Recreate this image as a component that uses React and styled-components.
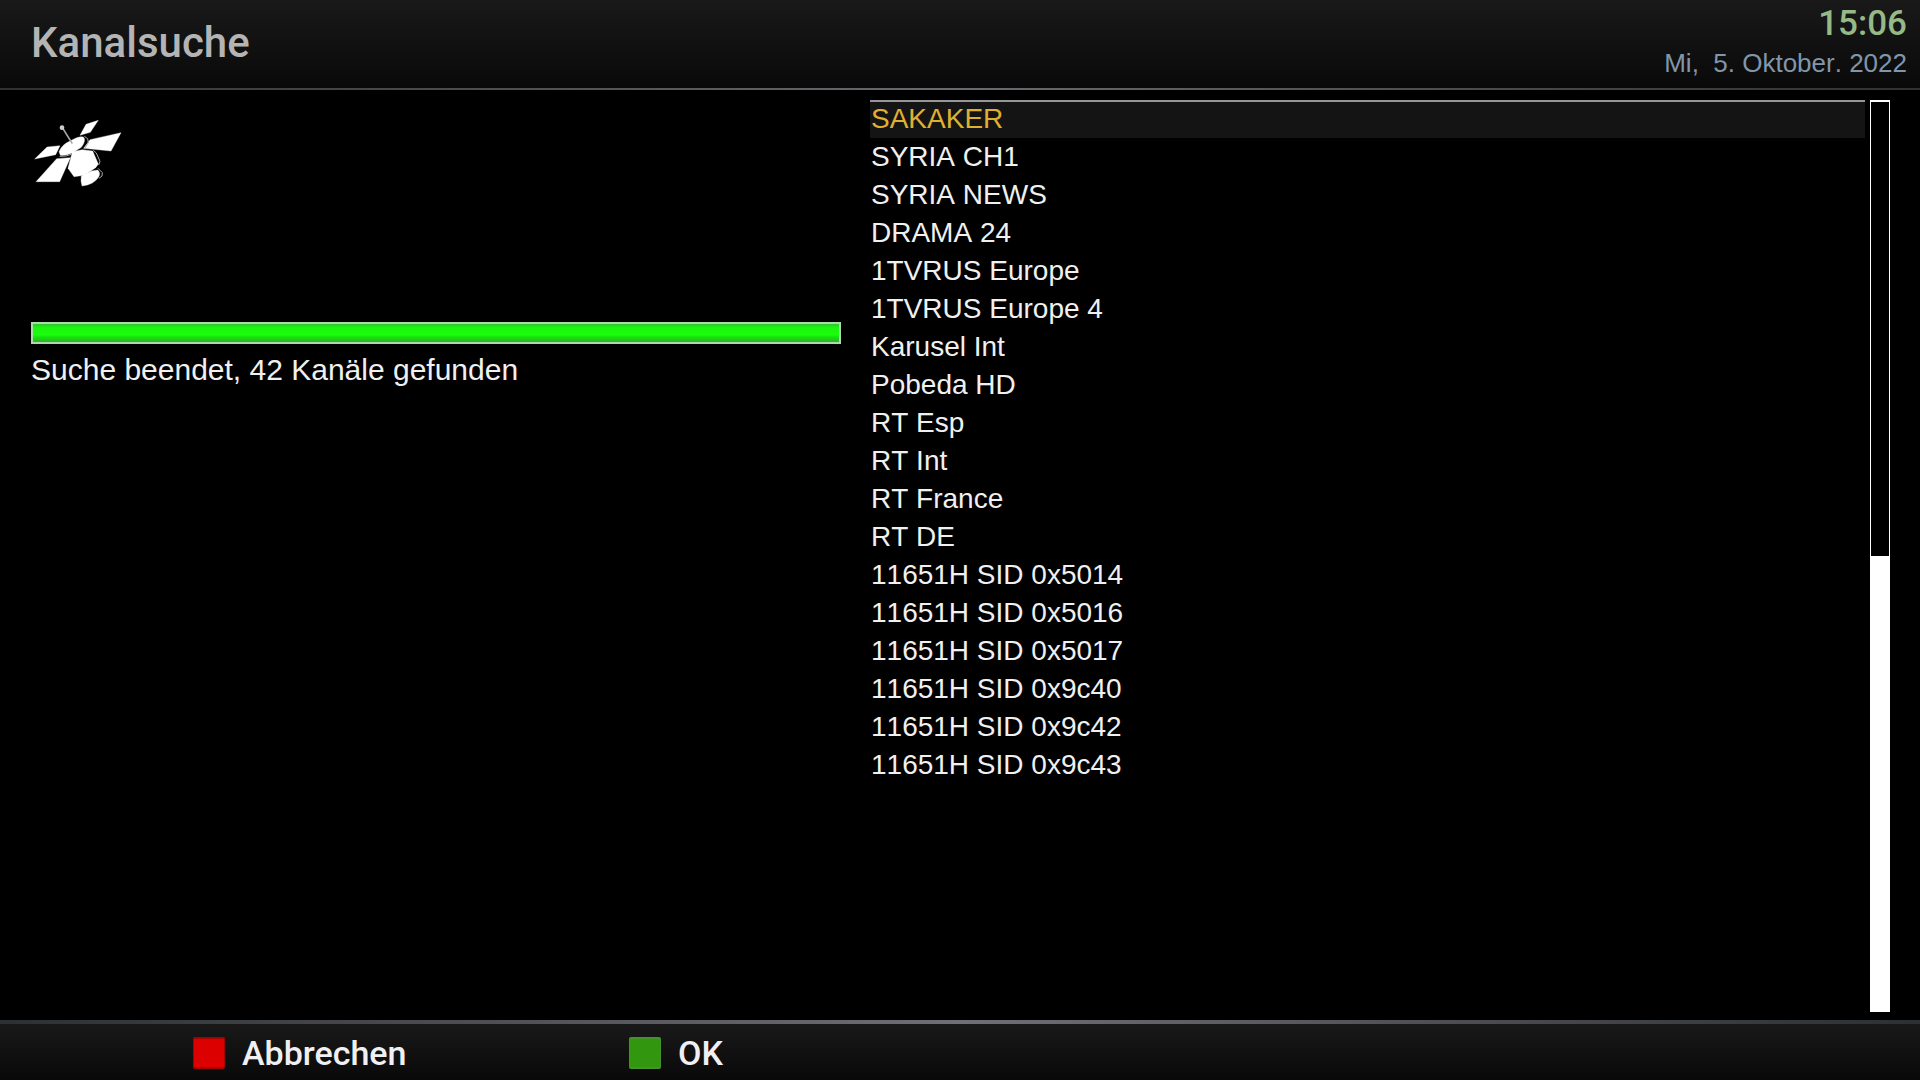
import React from 'react';
import styled, { createGlobalStyle } from 'styled-components';

const channels = [
  'SAKAKER',
  'SYRIA CH1',
  'SYRIA NEWS',
  'DRAMA 24',
  '1TVRUS Europe',
  '1TVRUS Europe 4',
  'Karusel Int',
  'Pobeda HD',
  'RT Esp',
  'RT Int',
  'RT France',
  'RT DE',
  '11651H SID 0x5014',
  '11651H SID 0x5016',
  '11651H SID 0x5017',
  '11651H SID 0x9c40',
  '11651H SID 0x9c42',
  '11651H SID 0x9c43',
];

const GlobalStyle = createGlobalStyle`
  * {
    box-sizing: border-box;
  }
  body {
    margin: 0;
    background: #000;
    color: #f0f0f0;
    font-family: 'Liberation Sans', Arial, sans-serif;
    font-kerning: none;
  }
`;

const Screen = styled.div`
  display: flex;
  flex-direction: column;
  min-height: 100vh;
`;

const Header = styled.header`
  display: flex;
  justify-content: space-between;
  padding: 0 13px 0 31px;
  height: 90px;
  background: linear-gradient(#191919, #090909);
  border-bottom: 2px solid;
  border-image: linear-gradient(90deg, #2e3133, #6a6a70 50%, #2e3133) 1;
`;

const Title = styled.h1`
  margin: 0;
  color: #b4b4b4;
  font: 500 42px/86px Roboto, sans-serif;
`;

const Clock = styled.div`
  display: flex;
  flex-direction: column;
  align-items: flex-end;
`;

const Time = styled.time`
  color: #96b988;
  font: 500 35px/48px Roboto, sans-serif;
`;

const Today = styled.span`
  color: #8296aa;
  font-size: 26px;
  line-height: 30px;
  white-space: pre;
`;

const Content = styled.main`
  display: flex;
  flex: 1;
  padding: 10px 30px 8px 31px;
`;

const Status = styled.section`
  flex: 0 0 810px;
  margin-right: 29px;
`;

const Satellite = styled.svg`
  display: block;
  width: 92px;
  height: 72px;
  margin: 17px 0 133px;
`;

const Progress = styled.div`
  height: 22px;
  border: 2px solid #a9dca9;
`;

const ProgressFill = styled.div`
  height: 100%;
  background: linear-gradient(#2fc52b, #1bf50f 20%, #1aff0c 60%, #14e60a 72%, #35ad30);
`;

const Message = styled.p`
  margin: 8px 0 0;
  font-size: 30px;
  line-height: 36px;
`;

const ChannelList = styled.ul`
  flex: 1;
  margin: 0 5px 0 0;
  padding: 0;
  list-style: none;
`;

const Channel = styled.li`
  height: 38px;
  padding: 0 1px;
  border-top: 2px solid ${props => (props.$active ? '#969696' : 'transparent')};
  background: ${props => (props.$active ? '#141414' : 'transparent')};
  color: ${props => (props.$active ? '#e0b030' : '#f0f0f0')};
  font-size: 28px;
  line-height: 34px;
`;

const Scrollbar = styled.div`
  display: flex;
  flex-direction: column;
  justify-content: flex-end;
  width: 20px;
  border: 1px solid #fff;
  border-top-width: 2px;
`;

const Thumb = styled.div`
  height: calc(50% + 1px);
  background: #fff;
`;

const Footer = styled.footer`
  display: flex;
  height: 60px;
  padding: 2px 0 0 193px;
  background: linear-gradient(#191919, #090909);
  border-top: 4px solid;
  border-image: linear-gradient(90deg, #2c3032, #706e76 50%, #2c3032) 1;
`;

const KeyButton = styled.button`
  display: flex;
  align-items: center;
  gap: 17px;
  width: 436px;
  padding: 0;
  border: 0;
  background: none;
  color: #f0f0f4;
  font: 500 34px/40px Roboto, sans-serif;
`;

const Key = styled.span`
  width: 32px;
  height: 32px;
  border: solid ${props => props.$edge};
  border-width: 2px 1px;
  border-radius: 2px;
  background: ${props => props.$color};
`;

const SatelliteIcon = () => (
  <Satellite viewBox='34 36 276 216' aria-hidden='true'>
    <g fill='#fff' stroke='#fff' strokeLinejoin='round'>
      <path d='M199 58 L236 46 L212 82 L181 91 Z' />
      <path d='M211 104 L304 83 L274 138 L192 130 Z' />
      <path d='M82 126 L121 122 L108 149 L45 162 Z' />
      <path d='M111 161 L152 158 L120 230 L49 230 Z' />
      <path d='M118 140 Q126 119 151 108 Q179 92 191 96 Q201 105 185 127 L158 144 Q139 153 122 151 Z' />
      <path d='M158 140 L188 134 L219 138 L236 177 L228 188 L194 211 L163 215 L145 190 Z' />
      <path d='M185 213 L216 198 L234 195 Q244 203 237 216 Q223 239 187 243 Q182 229 185 213 Z' />
    </g>
    <g fill='none' stroke='#aaa' strokeWidth='3'>
      <path d='M194 94 L204 101 L206 113 L194 132' />
      <path d='M221 136 L230 144 L241 169 L237 180' />
      <path d='M235 190 L248 203 L247 213 L238 220' />
      <path d='M120 154 L139 153 L155 148' />
      <path d='M128 68 L158 116' strokeWidth='5' />
    </g>
    <circle cx='127' cy='68' r='7' fill='#ccc' />
  </Satellite>
);

const App = () => (
  <>
    <GlobalStyle />
    <Screen>
      <Header>
        <Title>Kanalsuche</Title>
        <Clock>
          <Time>15:06</Time>
          <Today>{'Mi,  5. Oktober. 2022'}</Today>
        </Clock>
      </Header>
      <Content>
        <Status>
          <SatelliteIcon />
          <Progress role='progressbar' aria-label='Kanalsuche' aria-valuenow={100}>
            <ProgressFill />
          </Progress>
          <Message>Suche beendet, 42 Kanäle gefunden</Message>
        </Status>
        <ChannelList>
          {channels.map((name, i) => (
            <Channel key={name} $active={i === 0}>{name}</Channel>
          ))}
        </ChannelList>
        <Scrollbar>
          <Thumb />
        </Scrollbar>
      </Content>
      <Footer>
        <KeyButton type='button'>
          <Key $color='#dc0000' $edge='#a80000' />
          Abbrechen
        </KeyButton>
        <KeyButton type='button'>
          <Key $color='#32960f' $edge='#43922c' />
          OK
        </KeyButton>
      </Footer>
    </Screen>
  </>
);

export default App;
